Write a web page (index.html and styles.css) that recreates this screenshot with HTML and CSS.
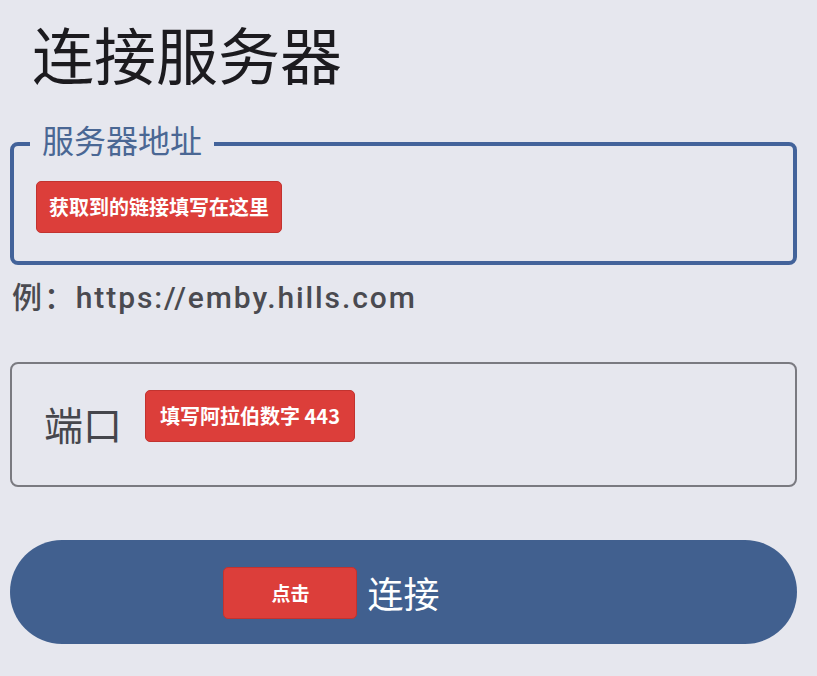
FILE: index.html
```html
<!DOCTYPE html>
<html lang="zh-CN">
<head>
    <meta charset="UTF-8">
    <meta name="viewport" content="width=device-width, initial-scale=1.0">
    <title>连接服务器</title>
    <link rel="stylesheet" href="styles.css">
</head>
<body>
    <div class="page">
        <h1 class="title">连接服务器</h1>

        <fieldset class="field field-active">
            <legend>服务器地址</legend>
            <div class="field-row">
                <span class="tag">获取到的链接填写在这里</span>
            </div>
        </fieldset>
        <p class="hint">例：https://emby.hills.com</p>

        <div class="field field-port">
            <span class="field-label">端口</span>
            <span class="tag">填写阿拉伯数字 443</span>
        </div>

        <button class="connect">
            <span class="connect-text">连接<span class="tag tag-click">点击</span></span>
        </button>
    </div>
</body>
</html>
```

FILE: styles.css
```css
body {
    margin: 0;
    background-color: #e6e7ee;
    font-family: "Noto Sans CJK SC", "Noto Sans", sans-serif;
}
.page {
    padding: 16px 20px 0 10px;
}
.title {
    margin: 0 0 0 22px;
    font-size: 62px;
    line-height: 74px;
    font-weight: 400;
    color: #1c1b1f;
}
.field {
    margin: 0;
    box-sizing: border-box;
    border-radius: 8px;
}
.field-active {
    margin-top: 30px;
    border: 4px solid #43639a;
    padding: 0 16px;
    height: 145px;
}
.field-active legend {
    padding: 0 12px 10px;
    font-size: 32px;
    line-height: 38px;
    color: #4a6794;
}
.field-row {
    display: flex;
    padding: 13px 0 0 6px;
}
.tag {
    display: inline-block;
    box-sizing: border-box;
    height: 52px;
    line-height: 50px;
    padding: 0 12px;
    border: 1px solid #c2332f;
    border-radius: 5px;
    background-color: #dc3e3a;
    color: #ffffff;
    font-size: 20px;
    font-weight: 700;
    white-space: nowrap;
}
.hint {
    margin: 15px 0 0 2px;
    font-family: Roboto, "Noto Sans CJK SC", sans-serif;
    font-size: 30px;
    line-height: 36px;
    font-weight: 500;
    letter-spacing: 1.9px;
    color: #4a4a50;
}
.field-port {
    display: flex;
    align-items: flex-start;
    gap: 23px;
    margin-top: 46px;
    height: 125px;
    padding: 26px 0 0 32px;
    border: 2px solid #7a7a80;
}
.field-label {
    margin-top: 10px;
    font-size: 39px;
    line-height: 46px;
    color: #45464c;
}
.field-port .tag {
    padding: 0 14px;
}
.connect {
    display: flex;
    justify-content: center;
    align-items: center;
    width: 100%;
    height: 104px;
    margin-top: 53px;
    border: none;
    border-radius: 52px;
    background-color: #41608f;
    font-family: inherit;
    cursor: pointer;
}
.connect-text {
    position: relative;
    font-size: 36px;
    line-height: 44px;
    color: #ffffff;
}
.tag-click {
    position: absolute;
    right: calc(100% + 10px);
    top: -3px;
    width: 134px;
    text-align: center;
    font-size: 19px;
}
```
